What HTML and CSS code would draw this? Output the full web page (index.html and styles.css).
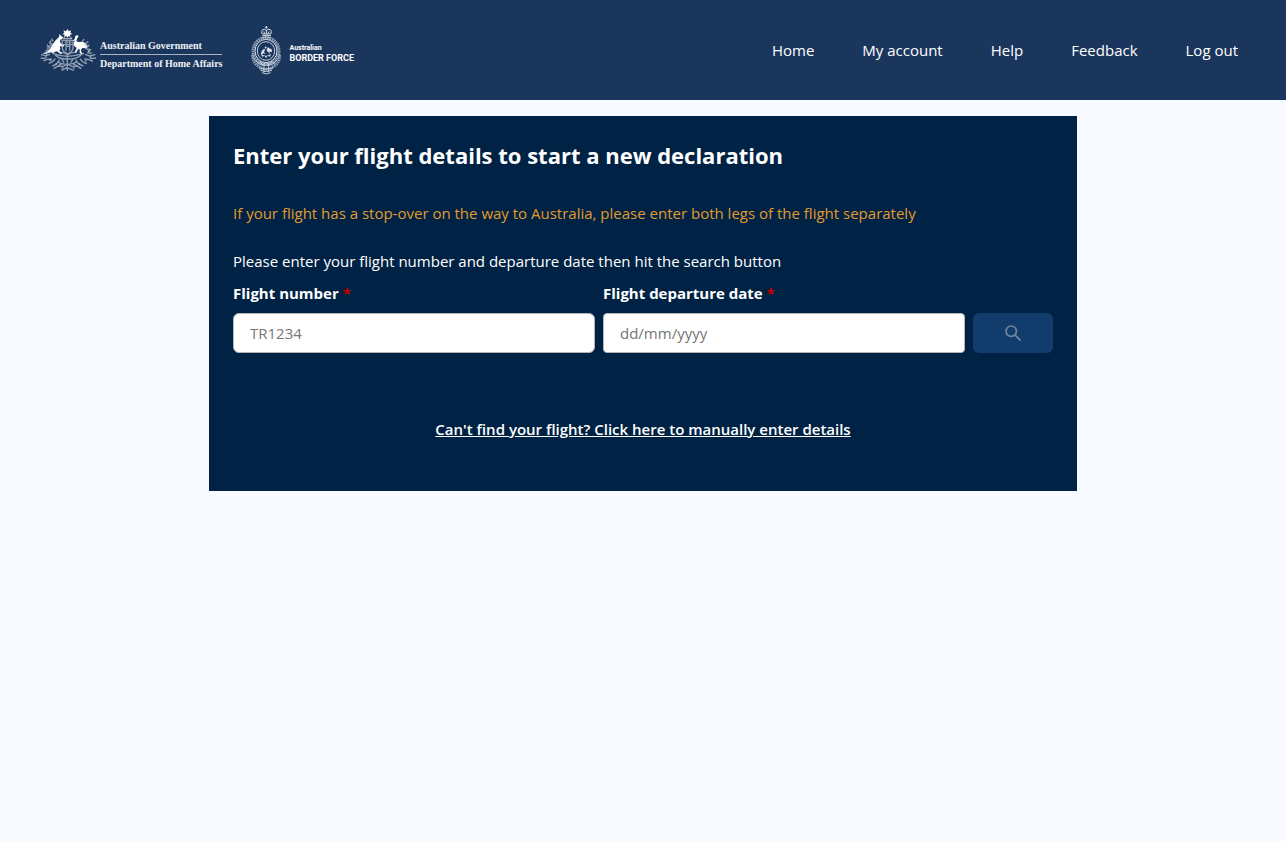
FILE: index.html
```html
<!DOCTYPE html>
<html lang="en">
<head>
<meta charset="utf-8">
<meta name="viewport" content="width=device-width, initial-scale=1">
<title>New declaration</title>
<link rel="stylesheet" href="styles.css">
</head>
<body>
<header class="header">
  <div class="logos">
    <div class="logo">
      <svg class="crest" viewBox="12 18 168 132" aria-hidden="true">
        <g class="crest-solid">
          <path d="M95 21l3 7 7-3-2 7 6 4-7 2 1 7-6-3-3 6-3-6-7 3 2-7-7-2 6-4-3-7 8 3z"/>
          <path d="M71 36l4 5 6 5-2 5-6 2-1 8 7 7 5 1-1 5-8-1-3-2 1 9-3 6 8 8-4 3-9-8-5-1-8 5-9-2-11 3-15 3 17-8 8-8 7-13 10-13 10-10z"/>
          <path d="M116 51l2-9 6-3 4 5-4 4-3 9 5 3 14-1 11 6 3 10-6 4-9-1-4 5 1 7 5 6-6 1-4-6 0-9-4-1-7 11-4-1 6-13-8-7-1-9 4-6-7 1z"/>
        </g>
        <g class="crest-line">
          <path d="M79 55h32v24q-3 12-16 16q-13-4-16-16zM79 68h32M90 55v31M101 55v31M82 50h26M91 73h9M86 61h2M103 61h4M95 58v6"/>
          <path d="M72 92q11-3 22 7q14-10 28-7M49 94q22 8 45 9q24-1 50-9M58 99q12 13 35 12q27 1 43-12"/>
          <path d="M39 61l10 6-9 5 4 8-13 6 4 8M47 50l4 8M33 68l5 8M25 91l9 7M151 61l-5 8 8 2-4 9 13 3-7 9 12 2M144 51l-5 8M160 68l-6 8"/>
          <path d="M15 98l14 3 13-4M14 108l15 2M22 117l11-5 15-1M38 124q13-3 20-14M49 132q18-6 21-20M53 140l26-16M178 98l-17 4-14-5M180 108l-17 2M171 118l-14-6-12-1M153 125q-15-4-21-15M142 132q-19-6-23-20M136 140l-26-16"/>
          <path d="M64 119q14 9 29 8q18 0 32-8M66 132l16 1 12-7 14 7 18-1M76 145l17-8 21 8M94 104v42M77 110l7 12M112 110l-8 12"/>
        </g>
        <g class="crest-dots">
          <path d="M43 58h1M35 78h1M51 75h1M29 105h1M42 115h1M60 126h1M79 138h1M113 138h1M130 126h1M149 117h1M163 106h1M157 87h1M148 73h1M154 60h1M39 91h1M84 48h1M105 48h1"/>
        </g>
      </svg>
      <div class="dept">
        <span class="dept-gov">Australian Government</span>
        <span class="dept-name">Department of Home Affairs</span>
      </div>
    </div>
    <div class="logo logo-force">
      <svg class="badge" viewBox="15 12 90 147" aria-hidden="true">
        <g class="badge-line">
          <path d="M61 12v8M57 16h8M49 36q-6-8 1-13q6-3 11 2q6-5 12-2q7 5 1 13zM49 41h26M61 24v12M53 28l3 7M69 28l-3 7" class="badge-strong"/>
          <path d="M47 48q14-7 28 0"/>
          <ellipse cx="60" cy="87" rx="33" ry="35" class="badge-strong"/>
          <ellipse cx="60" cy="87" rx="26" ry="28"/>
          <ellipse cx="60" cy="87" rx="39" ry="40" class="badge-wreath"/>
          <path d="M20 98q0 26 20 36q9 8 20 8q13 0 21-8q20-10 20-36" class="badge-wreath"/>
          <path d="M29 113q6 17 31 17q25 0 32-17M34 127l10-9 5 12 11-9 10 9 6-12 11 9M39 138q21 7 42 0M43 145q18 8 35 0M48 152l13 4 13-4M54 121v30M67 121v30"/>
        </g>
        <g class="badge-solid">
          <path d="M45 93q2-10 10-13l2 4-3 5 4 7-5-2-8 4zM63 80l3-5 2 3 9 4 1 8-7-1-1 8-3-8-5-2zM58 73l2 3 3-1-2 4-3 1-2-3z"/>
          <path d="M44 96q16 10 32 0l-5 8-7-3-4 8-4-8-7 3z"/>
        </g>
      </svg>
      <div class="force">
        <span class="force-small">Australian</span>
        <span class="force-name">BORDER FORCE</span>
      </div>
    </div>
  </div>
  <nav class="nav" aria-label="Main">
    <a class="nav-link" href="#">Home</a>
    <a class="nav-link" href="#">My account</a>
    <a class="nav-link" href="#">Help</a>
    <a class="nav-link" href="#">Feedback</a>
    <a class="nav-link" href="#">Log out</a>
  </nav>
</header>
<main class="main">
  <section class="card">
    <h1 class="title">Enter your flight details to start a new declaration</h1>
    <p class="notice">If your flight has a stop-over on the way to Australia, please enter both legs of the flight separately</p>
    <p class="hint">Please enter your flight number and departure date then hit the search button</p>
    <form class="search">
      <div class="field">
        <label class="label" for="flight">Flight number <span class="required">*</span></label>
        <input class="input" id="flight" type="text" placeholder="TR1234">
      </div>
      <div class="field">
        <label class="label" for="date">Flight departure date <span class="required">*</span></label>
        <input class="input input-date" id="date" type="text" placeholder="dd/mm/yyyy">
      </div>
      <button class="button" type="submit" aria-label="Search" disabled>
        <svg class="button-icon" viewBox="0 0 16 16" aria-hidden="true"><circle cx="6.2" cy="6.2" r="5.2"/><path d="M10 10l5.5 5.5"/></svg>
      </button>
    </form>
    <a class="manual" href="#">Can't find your flight? Click here to manually enter details</a>
  </section>
</main>
</body>
</html>
```
FILE: styles.css
```css
* { box-sizing: border-box; }

body {
  margin: 0;
  background: #f7fbff;
  color: #fff;
  font-family: "Segoe UI", "Open Sans", sans-serif;
  font-size: 15px;
  line-height: 24px;
}

.header {
  display: flex;
  align-items: center;
  justify-content: space-between;
  min-height: 100px;
  padding: 0 48px 0 40px;
  background: #1b365d;
}

.logos { display: flex; align-items: center; gap: 29px; }
.logo { display: flex; align-items: center; gap: 4px; }
.logo-force { gap: 8px; }

.crest { width: 56px; height: 44px; }
.crest-solid { fill: #fff; }
.crest-line { fill: none; stroke: #c3ccd8; stroke-width: 4; opacity: 0.7; }
.crest-dots { fill: none; stroke: #dfe5ec; stroke-width: 5; stroke-linecap: round; opacity: 0.7; }

.dept {
  display: flex;
  flex-direction: column;
  padding-top: 10px;
  color: #eef1f5;
  font-family: "Liberation Serif", serif;
  font-size: 10px;
  font-weight: 700;
  line-height: 16px;
}
.dept-gov { border-bottom: 1px solid #a9b5c5; }
.dept-name { line-height: 18px; }

.badge { width: 30px; height: 49px; }
.badge-line { fill: none; stroke: #c3ccd8; stroke-width: 3; }
.badge-strong { stroke: #dce2ea; stroke-width: 3; }
.badge-wreath { stroke: #a9b7c8; stroke-width: 9; stroke-dasharray: 5 2; opacity: 0.8; }
.badge-solid { fill: #dce2ea; }

.force {
  display: flex;
  flex-direction: column;
  padding-top: 8px;
  font-family: Roboto, sans-serif;
  font-weight: 700;
}
.force-small { font-size: 7px; line-height: 8px; }
.force-name { font-size: 9px; line-height: 12px; }

.nav { display: flex; gap: 48px; }
.nav-link { color: #fff; text-decoration: none; }

.main { padding: 16px; }

.card {
  display: flex;
  flex-direction: column;
  max-width: 868px;
  margin: 0 auto;
  padding: 24px 24px 50px;
  background: #002244;
}

.title { margin: 0 0 31px; font-size: 22px; font-weight: 700; line-height: 30px; }
.notice { margin: 0 0 24px; color: #e29b2f; line-height: 24px; }
.hint { margin: 0 0 8px; }

.search { display: flex; align-items: flex-end; gap: 8px; }
.field { display: flex; flex: 1; flex-direction: column; gap: 8px; min-width: 0; }
.label { font-weight: 700; }
.required { color: #c00; }

.input {
  width: 100%;
  height: 40px;
  padding: 0 16px;
  border: 1px solid #b4b4b4;
  border-radius: 6px;
  background: #fff;
  color: #222;
  font: inherit;
}
.input-date { border-radius: 4px; }
.input::placeholder { color: #757575; opacity: 1; }

.button {
  display: flex;
  align-items: center;
  justify-content: center;
  width: 80px;
  height: 40px;
  padding: 0;
  border: 0;
  border-radius: 6px;
  background: #113c6c;
}
.button-icon { width: 16px; height: 16px; fill: none; stroke: #71869e; stroke-width: 1.7; }

.manual { align-self: center; margin-top: 64px; color: #fff; font-weight: 600; }
```
